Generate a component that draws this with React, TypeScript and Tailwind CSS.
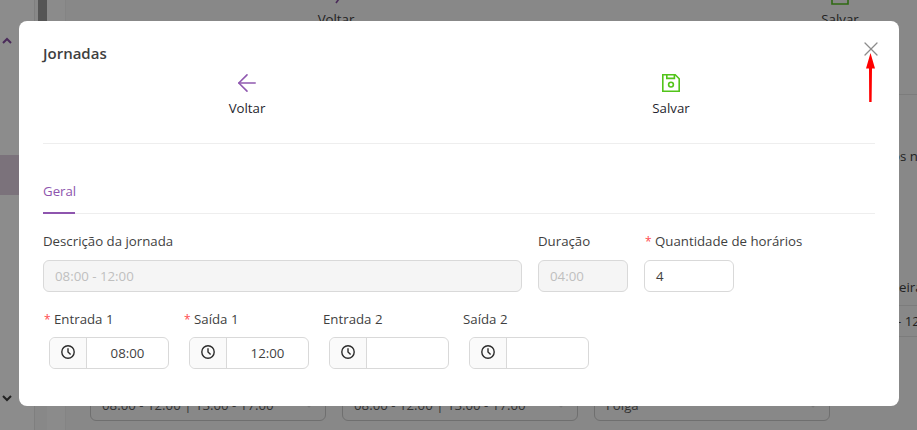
import { ArrowLeft, X } from "lucide-react";
import { ReactNode } from "react";

function Label({ required, children }: { required?: boolean; children: ReactNode }) {
  return (
    <label className="block h-[22px] text-[13.25px] leading-[22px] text-[#3f3f3f] whitespace-nowrap">
      {required && <span className="inline-block w-[11px] text-[12px] text-[#ff4d4f] pl-[1px]">*</span>}
      {children}
    </label>
  );
}

function ClockIcon() {
  return (
    <svg width="14" height="14" viewBox="0 0 14 14" fill="none" stroke="#2b2b2b" strokeWidth="1.4">
      <circle cx="7" cy="7" r="6.2" />
      <path d="M7 3.2V7l2.6 2.4" />
    </svg>
  );
}

function TimeField({ label, value, required }: { label: string; value?: string; required?: boolean }) {
  return (
    <div className="w-[140px]">
      <Label required={required}>{label}</Label>
      <div className="mt-[7px] ml-[6px] w-[120px] h-[32px] flex rounded-md border border-[#d9d9d9] bg-white">
        <div className="w-[37px] flex items-center justify-center bg-[#fafafa] border-r border-[#d9d9d9] rounded-l-md pb-[2px]">
          <ClockIcon />
        </div>
        <div className="flex-1 text-center text-[13.25px] leading-[30px] text-[#3f3f3f]">{value}</div>
      </div>
    </div>
  );
}

function DimSelect({ children }: { children: string }) {
  return (
    <div className="w-[236px] h-[32px] shrink-0 flex items-center justify-between rounded-md border border-[#6f6f6f] px-[11px] text-[13.25px] leading-[30px] text-[#333] whitespace-nowrap">
      {children}
      <svg width="10" height="6" viewBox="0 0 10 6" fill="none" stroke="#777" strokeWidth="1.2"><path d="M1 1l4 4 4-4" /></svg>
    </div>
  );
}

// dimmed page behind the modal, only the edges show
function Background() {
  return (
    <div className="absolute inset-0 flex bg-[#888888] overflow-hidden">
      <div className="w-[35px] shrink-0 border-r border-[#7f7f7f] flex flex-col bg-[#8c8c8c]">
        <div className="h-[37px]" />
        <div className="h-[118px] pl-[2px]">
          <svg width="10" height="8" viewBox="0 0 10 8" fill="none" stroke="#4a2a5a" strokeWidth="2"><path d="M1 6l4-4 4 4" /></svg>
        </div>
        <div className="h-[40px] bg-[#7b727b]" />
        <div className="h-[198px]" />
        <div className="pl-[2px] pt-[1px]">
          <svg width="10" height="8" viewBox="0 0 10 8" fill="none" stroke="#222" strokeWidth="2"><path d="M1 2l4 4 4-4" /></svg>
        </div>
      </div>
      <div className="w-[3px] shrink-0" />
      <div className="w-[9px] shrink-0 bg-[#555555] h-[21px]" />
      <div className="w-[19px] shrink-0 bg-[#8b8b8b] border-r border-[#848484]" />
      <div className="flex-1 flex flex-col min-w-0">
        <div className="flex h-[95px] border-b border-[#7c7c7c]">
          <div className="ml-[250px] w-[40px] flex flex-col items-center text-[13.25px] leading-[22px] text-[#222] pt-[3px]">
            <svg className="-mt-[3px]" width="18" height="8" viewBox="0 0 18 8" fill="none" stroke="#4a2a5a" strokeWidth="1.6"><path d="M14 -4L9 3" /></svg>
            <span className="whitespace-nowrap">Voltar</span>
          </div>
          <div className="ml-[464px] w-[40px] flex flex-col items-center text-[13.25px] leading-[22px] text-[#222] pt-[3px]">
            <svg className="-mt-[3px]" width="18" height="8" viewBox="0 0 18 8" fill="none" stroke="#2f6a12" strokeWidth="1.6"><path d="M1 -2v6h16v-6" /></svg>
            <span className="whitespace-nowrap">Salvar</span>
          </div>
        </div>
        <div className="pl-[826px] pt-[50px] text-[13.25px] leading-[22px] text-[#222] whitespace-nowrap">os n</div>
        <div className="pl-[833px] pt-[109px] text-[13.25px] leading-[22px] text-[#222] whitespace-nowrap">eira</div>
        <div className="ml-[828px] mt-[7px] h-[32px] w-[60px] pl-[3px] border-y border-[#7c7c7c] text-[13.25px] leading-[30px] text-[#222] whitespace-nowrap">- 12</div>
        <div className="flex gap-[16px] pl-[24px] mt-[52px]">
          <DimSelect>08:00 - 12:00 | 13:00 - 17:00</DimSelect>
          <DimSelect>08:00 - 12:00 | 13:00 - 17:00</DimSelect>
          <DimSelect>Folga</DimSelect>
        </div>
      </div>
    </div>
  );
}

export default function App() {
  return (
    <div className="relative w-[917px] h-[430px] overflow-hidden font-['Open_Sans',sans-serif]">
      <Background />
      <div className="absolute left-[19px] top-[21px] w-[880px] h-[385px] bg-white rounded-[8px] px-[24px]">
        <button className="absolute right-[16px] top-[16px] text-[#8c8c8c]">
          <X size={24} strokeWidth={1.3} />
        </button>
        <svg className="absolute left-[845px] top-[32px]" width="12" height="50" viewBox="0 0 12 50">
          <path d="M6.5 0L11 15.5H8L7.6 49H5.2L5 15.5H2z" fill="#ff0000" />
        </svg>
        <h1 className="pt-[21px] text-[15px] leading-[22px] font-semibold text-[#3f3f3f]">Jornadas</h1>
        <div className="flex justify-between pl-[184px] pr-[184px] mt-[9px]">
          <div className="flex flex-col items-center w-[40px]">
            <div className="h-[20px] flex items-center justify-center">
              <ArrowLeft size={28} strokeWidth={1.4} className="text-[#9059b0]" />
            </div>
            <span className="mt-[4px] text-[13.25px] leading-[22px] text-[#1f1f2e]">Voltar</span>
          </div>
          <div className="flex flex-col items-center w-[40px]">
            <svg width="18" height="18" viewBox="0 0 18 18" fill="none" stroke="#52c41a" strokeWidth="1.6" className="mt-[1px]">
              <path d="M.8.8h12.4l4 4v12.4H.8z" />
              <path d="M4.8.8v3.6h7.6V.8" />
              <circle cx="9" cy="10.6" r="2.4" />
            </svg>
            <span className="mt-[5px] text-[13.25px] leading-[22px] text-[#1f1f2e]">Salvar</span>
          </div>
        </div>
        <div className="mt-[24px] border-t border-[#eeeeee]" />
        <div className="mt-[34px] border-b border-[#eeeeee] h-[36px] relative">
          <span className="text-[13.25px] leading-[22px] text-[#8e55ae]">Geral</span>
          <div className="absolute left-0 bottom-[-1px] w-[32px] h-[2px] bg-[#8e55ae]" />
        </div>
        <div className="mt-[16px] flex">
          <div className="w-[479px]">
            <Label>Descrição da jornada</Label>
            <div className="mt-[8px] h-[32px] rounded-md border border-[#d9d9d9] bg-[#f5f5f5] px-[11px] text-[13.25px] leading-[30px] text-[#bfbfbf]">08:00 - 12:00</div>
          </div>
          <div className="ml-[16px] w-[90px]">
            <Label>Duração</Label>
            <div className="mt-[8px] h-[32px] rounded-md border border-[#d9d9d9] bg-[#f5f5f5] px-[11px] text-[13.25px] leading-[30px] text-[#bfbfbf]">04:00</div>
          </div>
          <div className="ml-[16px] w-[90px]">
            <Label required>Quantidade de horários</Label>
            <div className="mt-[8px] h-[32px] rounded-md border border-[#d9d9d9] bg-white px-[11px] text-[13.25px] leading-[30px] text-[#3f3f3f]">4</div>
          </div>
        </div>
        <div className="mt-[16px] flex">
          <TimeField required label="Entrada 1" value="08:00" />
          <TimeField required label="Saída 1" value="12:00" />
          <TimeField label="Entrada 2" />
          <TimeField label="Saída 2" />
        </div>
      </div>
    </div>
  );
}
